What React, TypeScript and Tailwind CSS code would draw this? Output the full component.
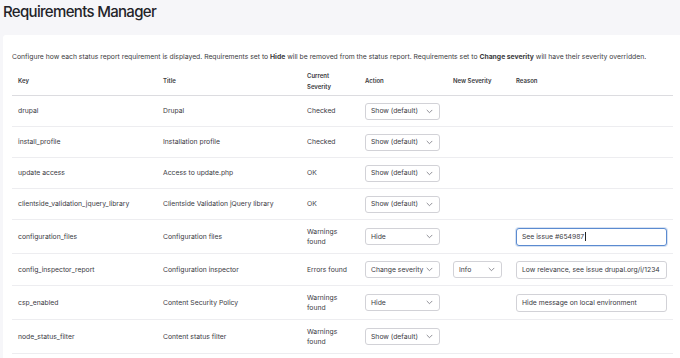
import React from 'react';

type Row = {
  key: string;
  title: string;
  severity: string;
  action: string;
  newSeverity?: string;
  reason?: string;
  focused?: boolean;
};

const rows: Row[] = [
  {key: 'drupal', title: 'Drupal', severity: 'Checked', action: 'Show (default)'},
  {key: 'install_profile', title: 'Installation profile', severity: 'Checked', action: 'Show (default)'},
  {key: 'update access', title: 'Access to update.php', severity: 'OK', action: 'Show (default)'},
  {
    key: 'clientside_validation_jquery_library',
    title: 'Clientside Validation jQuery library',
    severity: 'OK',
    action: 'Show (default)'
  },
  {
    key: 'configuration_files',
    title: 'Configuration files',
    severity: 'Warnings found',
    action: 'Hide',
    reason: 'See issue #654987',
    focused: true
  },
  {
    key: 'config_inspector_report',
    title: 'Configuration inspector',
    severity: 'Errors found',
    action: 'Change severity',
    newSeverity: 'Info',
    reason: 'Low relevance, see issue drupal.org/i/1234'
  },
  {
    key: 'csp_enabled',
    title: 'Content Security Policy',
    severity: 'Warnings found',
    action: 'Hide',
    reason: 'Hide message on local environment'
  },
  {key: 'node_status_filter', title: 'Content status filter', severity: 'Warnings found', action: 'Show (default)'}
];

function Chevron() {
  return (
    <svg className="h-[5px] w-[7px] shrink-0" viewBox="0 0 7 5" fill="none">
      <path d="M1 1.2 3.5 3.7 6 1.2" stroke="#74747c" strokeWidth="0.8" strokeLinecap="round" strokeLinejoin="round" />
    </svg>
  );
}

function Select({value, width}: {value: string; width: string}) {
  return (
    <div
      className={[
        'flex h-[17px] items-center justify-between rounded-[3px] border border-[#d2d2d7] bg-white pl-[5px] pr-[6px] text-[6.8px] text-[#3a3a3f]',
        width
      ].join(' ')}
    >
      <span className="whitespace-nowrap">{value}</span>
      <Chevron />
    </div>
  );
}

function ReasonInput({value, focused}: {value: string; focused?: boolean}) {
  return (
    <div
      className={[
        'flex h-[18px] w-[151px] items-center rounded-[3px] bg-white px-[5px] text-[6.8px] text-[#3a3a3f]',
        focused ? 'border-[1.5px] border-[#5b8bd0] shadow-[0_0_0_1px_rgba(91,139,208,0.25)]' : 'border border-[#d2d2d7]'
      ].join(' ')}
    >
      <span className="whitespace-nowrap">{value}</span>
      {focused && <span className="ml-[1px] h-[9px] w-px bg-[#222]" />}
    </div>
  );
}

export default function App() {
  return (
    <div className="h-[358px] w-[680px] overflow-hidden bg-[#f6f6f9] font-['Inter',sans-serif] text-[#3a3a3f]">
      <h1 className="pl-[3px] pt-[1px] text-[15px] font-medium leading-[22px] tracking-[-0.045em] text-[#232429]">
        Requirements Manager
      </h1>

      <div className="ml-[3px] mt-[12px] rounded-tl-[3px] bg-white pb-[24px] pl-[9px] pr-[7px] pt-[17px]">
        <p className="whitespace-nowrap text-[6.8px] leading-[10px] text-[#3b3b40]">
          Configure how each status report requirement is displayed. Requirements set to <b>Hide</b> will be removed
          from the status report. Requirements set to <b>Change severity</b> will have their severity overridden.
        </p>

        <table className="mt-[4px] w-[661px] table-fixed border-collapse text-[6.8px] leading-[10px]">
          <colgroup>
            <col className="w-[145px]" />
            <col className="w-[144px]" />
            <col className="w-[58px]" />
            <col className="w-[88px]" />
            <col className="w-[63px]" />
            <col />
          </colgroup>
          <thead>
            <tr className="border-b-[1.5px] border-[#dcdce0] text-left text-[6px] text-[#3a3a40]">
              <th className="pb-[3px] pl-[6px] pt-[4px] font-semibold">Key</th>
              <th className="pb-[3px] pl-[6px] pt-[4px] font-semibold">Title</th>
              <th className="pb-[3px] pl-[6px] pt-[4px] font-semibold leading-[11px]">
                Current
                <br />
                Severity
              </th>
              <th className="pb-[3px] pl-[6px] pt-[4px] font-semibold">Action</th>
              <th className="pb-[3px] pl-[6px] pt-[4px] font-semibold">New Severity</th>
              <th className="pb-[3px] pl-[6px] pt-[4px] font-semibold">Reason</th>
            </tr>
          </thead>
          <tbody>
            {rows.map((row) => (
              <tr key={row.key} className="border-b border-[#ededf0]">
                <td className="py-[6.5px] pl-[6px] align-middle">{row.key}</td>
                <td className="py-[6.5px] pl-[6px] align-middle">{row.title}</td>
                <td className="py-[6.5px] pl-[6px] pr-[6px] align-middle">{row.severity}</td>
                <td className="py-[6.5px] pl-[6px] align-middle">
                  <Select value={row.action} width="w-[75px]" />
                </td>
                <td className="py-[6.5px] pl-[6px] align-middle">
                  {row.newSeverity && <Select value={row.newSeverity} width="w-[49px]" />}
                </td>
                <td className="py-[6.5px] pl-[6px] align-middle">
                  {row.reason && <ReasonInput value={row.reason} focused={row.focused} />}
                </td>
              </tr>
            ))}
          </tbody>
        </table>
      </div>
    </div>
  );
}
